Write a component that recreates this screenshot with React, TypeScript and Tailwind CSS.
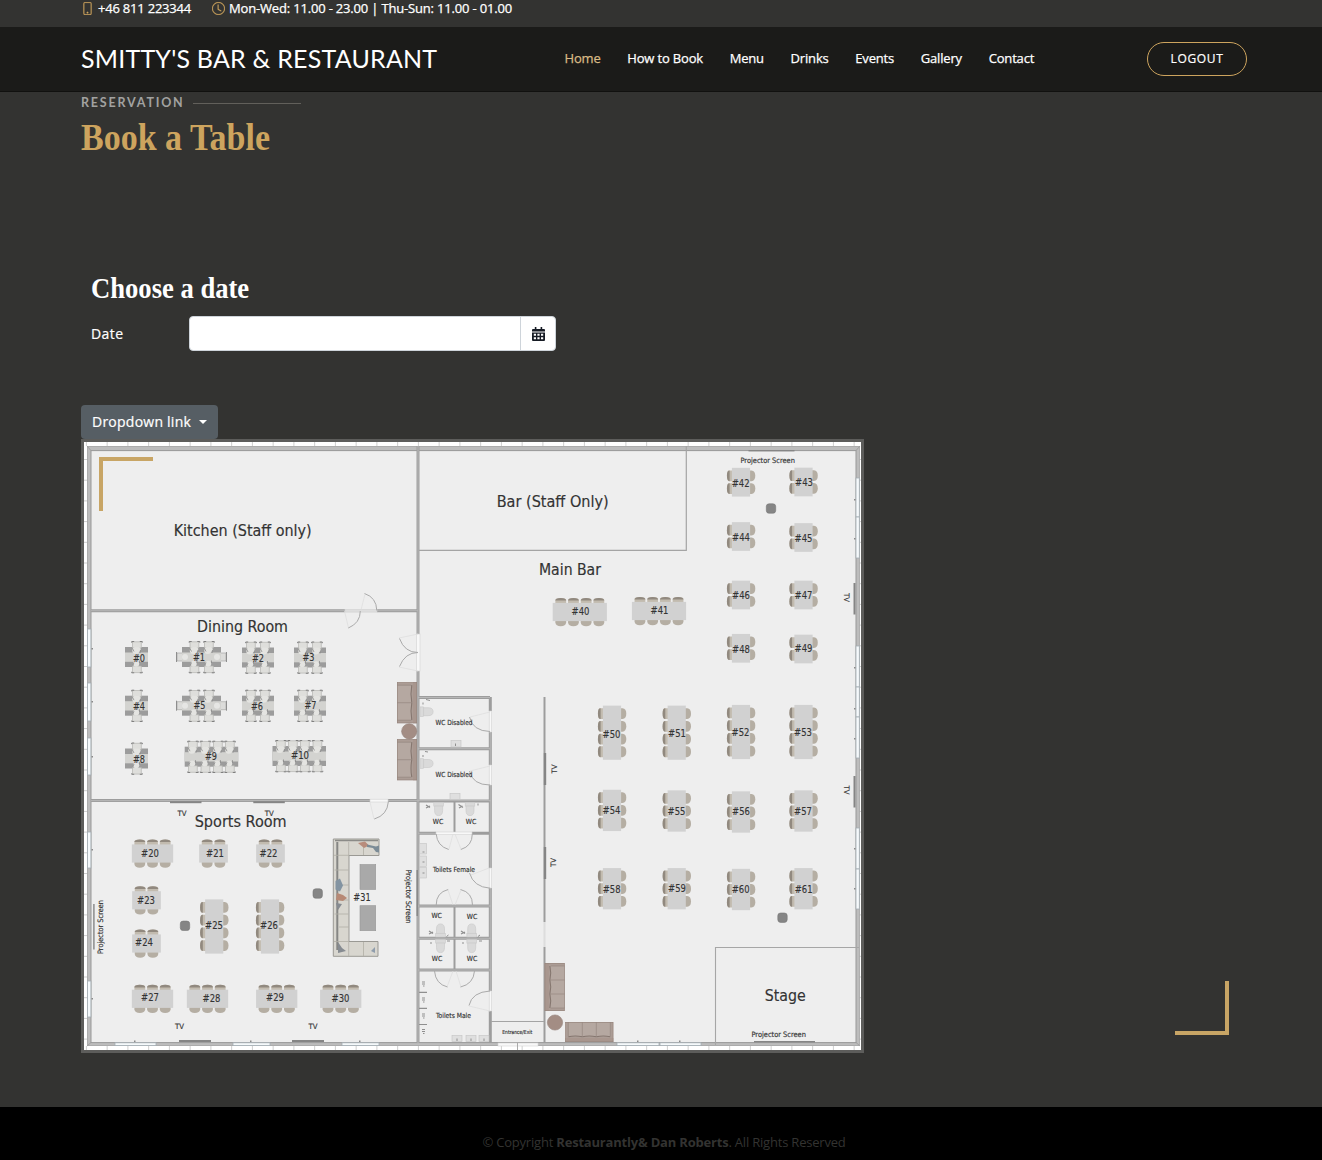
import { BsPhone, BsClock } from 'react-icons/bs';

type Seat = { id: number; x: number; y: number; n: number; lx: number; ly: number };

const flatTables: Seat[] = [
  { id: 20, x: 152.5, y: 853.5, n: 3, lx: 150, ly: 853 },
  { id: 21, x: 213.5, y: 853.5, n: 2, lx: 215, ly: 853.5 },
  { id: 22, x: 270.5, y: 853.5, n: 2, lx: 268.5, ly: 853 },
  { id: 23, x: 146.5, y: 900.3, n: 2, lx: 146, ly: 900 },
  { id: 24, x: 146.5, y: 943.5, n: 2, lx: 144, ly: 942.5 },
  { id: 27, x: 152.5, y: 998.8, n: 3, lx: 150, ly: 997.5 },
  { id: 28, x: 207.5, y: 998.8, n: 3, lx: 211.5, ly: 998.3 },
  { id: 29, x: 276.7, y: 998.8, n: 3, lx: 275, ly: 997.5 },
  { id: 30, x: 340.7, y: 998.8, n: 3, lx: 340.5, ly: 998.3 },
  { id: 40, x: 579.8, y: 612, n: 4, lx: 580.5, ly: 611 },
  { id: 41, x: 659, y: 611, n: 4, lx: 659.5, ly: 610.5 },
];

const tallTables: Seat[] = [
  { id: 25, x: 214.2, y: 926.5, n: 4, lx: 214, ly: 925.5 },
  { id: 26, x: 270, y: 926.5, n: 4, lx: 269, ly: 925 },
  { id: 42, x: 741, y: 482.2, n: 2, lx: 740.7, ly: 483 },
  { id: 43, x: 803.5, y: 482, n: 2, lx: 804, ly: 482.5 },
  { id: 44, x: 741, y: 536.5, n: 2, lx: 741, ly: 537.5 },
  { id: 45, x: 803.5, y: 537.5, n: 2, lx: 803.5, ly: 538 },
  { id: 46, x: 741, y: 595, n: 2, lx: 741, ly: 595.7 },
  { id: 47, x: 803.5, y: 595, n: 2, lx: 803.5, ly: 595 },
  { id: 48, x: 741, y: 648.3, n: 2, lx: 741, ly: 649 },
  { id: 49, x: 803.5, y: 649, n: 2, lx: 803.5, ly: 648.3 },
  { id: 50, x: 612, y: 732.7, n: 4, lx: 611.5, ly: 734 },
  { id: 51, x: 676.7, y: 732.7, n: 4, lx: 677, ly: 733 },
  { id: 52, x: 741, y: 732, n: 4, lx: 740.5, ly: 732.3 },
  { id: 53, x: 803.5, y: 732, n: 4, lx: 803, ly: 732.7 },
  { id: 54, x: 612, y: 810.4, n: 3, lx: 611.5, ly: 810.5 },
  { id: 55, x: 676.7, y: 811, n: 3, lx: 676.5, ly: 811.3 },
  { id: 56, x: 741, y: 812, n: 3, lx: 741, ly: 811.7 },
  { id: 57, x: 803.5, y: 811, n: 3, lx: 803, ly: 811.3 },
  { id: 58, x: 612, y: 888.7, n: 3, lx: 611.7, ly: 889 },
  { id: 59, x: 676.7, y: 888.7, n: 3, lx: 677, ly: 888.5 },
  { id: 60, x: 741, y: 889.5, n: 3, lx: 740.7, ly: 889.5 },
  { id: 61, x: 803.5, y: 888.7, n: 3, lx: 803.7, ly: 889 },
];

type Dining = { id: number; x: number; y: number; w: number; chairs: number[]; ends?: boolean; lx: number; ly: number };

const diningTables: Dining[] = [
  { id: 0, x: 125, y: 647, w: 23, chairs: [132], lx: 139, ly: 658.5 },
  { id: 1, x: 182, y: 647, w: 39, chairs: [189.5, 204], ends: true, lx: 199, ly: 657.5 },
  { id: 2, x: 242, y: 647.5, w: 32, chairs: [246, 260], lx: 258, ly: 658 },
  { id: 3, x: 294, y: 647.5, w: 32, chairs: [298, 312], lx: 308.5, ly: 657.5 },
  { id: 4, x: 125, y: 695.7, w: 23, chairs: [132], lx: 139, ly: 706 },
  { id: 5, x: 182, y: 695.7, w: 39, chairs: [189.5, 204], ends: true, lx: 199.5, ly: 705.5 },
  { id: 6, x: 242, y: 695.7, w: 32, chairs: [246, 260], lx: 257, ly: 706 },
  { id: 7, x: 294, y: 695.7, w: 32, chairs: [298, 312], lx: 310.5, ly: 705.3 },
  { id: 8, x: 125, y: 748.5, w: 23, chairs: [132], lx: 139, ly: 759 },
  { id: 9, x: 184.7, y: 746.7, w: 53.5, chairs: [188, 200.5, 213, 225], lx: 211, ly: 756.5 },
  { id: 10, x: 272.5, y: 746, w: 53.5, chairs: [276, 288, 300, 312.5], lx: 300, ly: 755.5 },
];

function Label({ x, y, w, size, children, rotate = 0 }: { x: number; y: number; w: number; size: number; children: string; rotate?: number }) {
  return (
    <text
      x={x}
      y={y + size * 0.34}
      textAnchor="middle"
      textLength={w}
      lengthAdjust="spacingAndGlyphs"
      fontSize={size}
      fill="#333"
      stroke="#333"
      strokeWidth="0.15"
      transform={rotate ? `rotate(${rotate} ${x} ${y})` : undefined}
      className="font-['DejaVu_Sans_Condensed','Noto_Sans',sans-serif]"
    >
      {children}
    </text>
  );
}

function TableSet({ seat, upright }: { seat: Seat; upright?: boolean }) {
  const len = [0, 0, 28.7, 41.3, 54.2][seat.n];
  const first = -((seat.n - 1) * 12.7) / 2 - 5.4;
  return (
    <>
      <g transform={`translate(${seat.x} ${seat.y})${upright ? ' rotate(-90)' : ''}`}>
        {Array.from({ length: seat.n }, (_, i) => {
          const x = first + i * 12.7;
          return (
            <g key={i}>
              <path d={`M${x} -8 v-4 q0 -2 5.4 -2 t5.4 2 v4z`} fill="#c2bbaf" />
              <path d={`M${x} -11.4 q0 -2.7 5.4 -2.7 t5.4 2.7z`} fill="#91897f" />
              <path d={`M${x} 8 v2.5 q0.5 3.8 5.4 3.8 t5.4 -3.8 v-2.5z`} fill="#b5aea3" />
            </g>
          );
        })}
        <rect x={-len / 2} y="-9.1" width={len} height="18.2" fill="#d1d1d1" />
      </g>
      <Label x={seat.lx} y={seat.ly} w={17.8} size={10.8}>{`#${seat.id}`}</Label>
    </>
  );
}

function DiningSet({ t }: { t: Dining }) {
  return (
    <>
      {t.ends && (
        <g fill="#dcdcda" stroke="#a0a09e" strokeWidth="0.6">
          <path d={`M${t.x + 1} ${t.y + 6} h-6 v8 h6z M${t.x + t.w - 1} ${t.y + 6} h6 v8 h-6z`} />
          <path d={`M${t.x - 5.5} ${t.y + 5} v10 M${t.x + t.w + 5.5} ${t.y + 5} v10`} stroke="#858585" strokeWidth="0.9" />
        </g>
      )}
      <rect x={t.x} y={t.y} width={t.w} height="20" fill="#9c9c9c" />
      <rect x={t.x} y={t.y + 5.5} width={t.w} height="9.3" fill="#d3d3d0" />
      {t.chairs.map((c) => (
        <g key={c}>
          <path d={`M${c + 0.5} ${t.y + 1} v-6.2 h8.8 v6.2z M${c + 0.5} ${t.y + 19} v6.6 h8.8 v-6.6z`} fill="#dededb" stroke="#b3b3b0" strokeWidth="0.7" />
          <path d={`M${c - 0.3} ${t.y - 4.3} v-1.2 h2.5 M${c + 7.8} ${t.y - 5.5} h2.5 v1.2 M${c - 0.3} ${t.y + 24.8} v1 h2.5 M${c + 7.8} ${t.y + 25.8} h2.5 v-1`} fill="none" stroke="#777" strokeWidth="0.9" />
          <circle cx={c + 3.8} cy={t.y + 3.5} r="3.5" fill="#e4e4e1" />
          <circle cx={c + 6.2} cy={t.y + 2.5} r="2.5" fill="#e4e4e1" />
          <circle cx={c + 4.2} cy={t.y + 16.8} r="3" fill="#e4e4e1" />
          <path d={`M${c + 0.5} ${t.y + 1.5} l1.5 3 M${c + 8.5} ${t.y + 3} l-0.5 3 M${c + 1} ${t.y + 18} l1 -2.5 M${c + 7.5} ${t.y + 13.5} v2.5`} stroke="#8a8a8a" strokeWidth="0.8" />
        </g>
      ))}
      {t.ends && (
        <g fill="#e6e6e4">
          <circle cx={t.x + 3} cy={t.y + 10} r="3" />
          <circle cx={t.x + t.w - 4} cy={t.y + 10} r="3" />
        </g>
      )}
      <Label x={t.lx} y={t.ly} w={t.id > 9 ? 18 : 12} size={10.6}>{`#${t.id}`}</Label>
    </>
  );
}

/* Couch seen from above: backrest along the top edge, one cushion per unit. */
function Couch({ x, y, w, n, rotate = 0 }: { x: number; y: number; w: number; n: number; rotate?: number }) {
  const cushion = (w - 6) / n;
  return (
    <g transform={`translate(${x} ${y}) rotate(${rotate})`}>
      <rect x={-w / 2} y="-10" width={w} height="20" fill="#ab9c95" />
      <rect x={-w / 2 + 3} y="-4.5" width={w - 6} height="14" fill="#b5a8a1" />
      <rect x={-w / 2} y="-10" width={w} height="4" fill="#a8968e" />
      {Array.from({ length: n }, (_, i) => (
        <path key={i} d={`M${-w / 2 + 3 + i * cushion} -4.8 q${cushion / 2} 1.6 ${cushion} 0`} fill="none" stroke="#85766f" strokeWidth="1.1" />
      ))}
      {Array.from({ length: n + 1 }, (_, i) => (
        <path key={i} d={`M${-w / 2 + 3 + i * cushion} -4 v14`} stroke="#95867f" strokeWidth="0.7" />
      ))}
      <rect x={-w / 2 + 0.3} y="-9.7" width={w - 0.6} height="19.4" fill="none" stroke="#96857d" strokeWidth="0.6" />
    </g>
  );
}

function Toilet({ x, y, rotate = 0 }: { x: number; y: number; rotate?: number }) {
  return (
    <g transform={`translate(${x} ${y}) rotate(${rotate})`} fill="#dadada" stroke="#c8c8c8" strokeWidth="0.6">
      <rect x="-4.8" y="0" width="9.6" height="3.6" />
      <path d="M-4 3.6 h8 v4.5 q0 5 -4 5 t-4 -5z" />
    </g>
  );
}

function FloorPlan() {
  return (
    <svg viewBox="84 442 777 608" className="block h-[608px] w-[777px]">
      <rect x="84" y="442" width="777" height="608" fill="#fff" />
      <g stroke="#cfcfcf" strokeWidth="1">
        {Array.from({ length: 38 }, (_, i) => (
          <path key={i} d={`M${86.4 + i * 20.75} 442 v4 M${86.4 + i * 20.75} 1046 v4`} />
        ))}
        {Array.from({ length: 29 }, (_, i) => (
          <path key={i} d={`M84 ${459.5 + i * 20.7} h3.5 M859.5 ${459.5 + i * 20.7} h1.5`} />
        ))}
      </g>

      {/* outer walls */}
      <rect x="87.4" y="446.4" width="772" height="599.2" fill="#bcbcbc" stroke="#a2a2a2" strokeWidth="0.8" />
      <rect x="91" y="450.6" width="765" height="592" fill="#eeeeee" stroke="#989898" strokeWidth="1" />
      <path d="M87 446 l4 4.6 M860 446 l-4 4.6 M87 1046 l4 -3.5 M860 1046 l-4 -3.5" stroke="#999" strokeWidth="0.8" />

      {/* windows */}
      <g fill="#f5f9fb" stroke="#a3adb3" strokeWidth="0.8">
        {[[629, 38], [683, 38], [738, 37], [832, 36], [981, 36]].map(([y, h]) => (
          <rect key={y} x="87.6" y={y} width="3.3" height={h} />
        ))}
        {[[478, 39], [517, 41], [646, 41], [687, 30], [717, 41], [828, 41], [869, 40]].map(([y, h]) => (
          <rect key={y} x="856" y={y} width="3.3" height={h} />
        ))}
        {[[115, 41], [233, 37], [342, 37], [617, 42], [660, 41]].map(([x, w]) => (
          <rect key={x} x={x} y="1042.8" width={w} height="2.8" />
        ))}
      </g>
      <g fill="#8a8a8a">
        {[648, 701, 756, 849, 998].map((y) => <rect key={y} x="91.5" y={y} width="1.5" height="1.5" />)}
        {[499, 538, 667, 708, 738, 848, 888].map((y) => <rect key={y} x="854" y={y} width="1.5" height="1.5" />)}
        {[134, 250, 359, 637, 679].map((x) => <rect key={x} x={x} y="1040.5" width="1.5" height="1.5" />)}
      </g>

      {/* inner walls: dark outline with a lighter core */}
      <g fill="none" stroke="#9d9d9d" strokeWidth="3">
        <path d="M91 610.7 H345 M377 610.7 H418 M91 800.6 H370 M388 800.6 H418" />
        <path d="M418 446 V634 M418 671 V1043" />
        <path d="M418 697.5 H490 M418 748.7 H490 M418 801 H491 M418 833.3 H436 M472 833.3 H491 M418 906 H491 M418 938.3 H491 M418 970 H491" />
        <path d="M490.3 697 V711 M490.3 732 V765 M490.3 785 V868 M490.3 888 V991 M490.3 1011 V1043" />
        <path d="M454.5 802 V833 M454.5 906 V970" strokeWidth="2" />
      </g>
      <g fill="none" stroke="#b7b7b7" strokeWidth="1">
        <path d="M91 610.7 H345 M377 610.7 H418 M91 800.6 H370 M388 800.6 H491 M418 446 V634 M418 671 V1043" />
        <path d="M418 697.5 H490 M418 748.7 H490 M418 833.3 H436 M418 906 H491 M418 938.3 H491 M418 970 H491 M490.3 732 V765 M490.3 785 V868 M490.3 888 V991" />
      </g>
      <path d="M544.5 697 V922 M544.5 947 V1043" stroke="#9d9d9d" strokeWidth="2" />
      <path d="M544.5 922 V947" stroke="#ddd" strokeWidth="2" />
      <path d="M419 550.3 H686.3 V446" fill="none" stroke="#a4a4a4" strokeWidth="1.2" />
      <path d="M491 1021.5 H544" stroke="#a4a4a4" strokeWidth="1" />
      <path d="M715.5 1045 V947.5 H859" fill="none" stroke="#a6a6a6" strokeWidth="1.1" />
      <path d="M419 992.3 h8 M419 1008.3 h8 M419 1024.5 h8" stroke="#8f8f8f" strokeWidth="1.2" />

      {/* doors */}
      <g fill="#f8f8f8" stroke="#d2d2d2" strokeWidth="0.6">
        <rect x="345" y="609.3" width="32" height="2.8" fill="#dedede" />
        <rect x="370" y="799.2" width="18" height="2.8" />
        <rect x="416.6" y="634" width="3.4" height="37" />
        <rect x="489.2" y="711" width="2.4" height="21" />
        <rect x="489.2" y="765" width="2.4" height="20" />
        <rect x="489.2" y="868" width="2.4" height="20" />
        <rect x="489.2" y="991" width="2.4" height="20" />
        <rect x="436" y="832" width="36" height="2.6" />
        <rect x="498" y="1043" width="40" height="3" />
      </g>
      <path d="M517.5 1042 v8" stroke="#aaa" />
      <g fill="none" stroke="#dcdcdc" strokeWidth="0.7">
        <path d="M361 610 l4 -16 M344.5 611 l4 17 M399 638 l19 -4 M399 667 l19 4 M470 717 l20 -5 M470 771 l20 -5 M471 875 l18 -7 M469 1006 l21 5 M374 819 l-4 -17" />
        <path d="M449 849 l4 -15 M461 849 l-6 -15 M448 890 l5 15 M461 890 l-6 15 M447 987 l6 -16 M461 987 l-5 -16" />
      </g>
      <g fill="none" stroke="#aaaaaa" strokeWidth="1">
        <path d="M364.5 593.5 q12 4 12.3 17 M360.3 611 q0 12 -12 17" />
        <path d="M399.5 638.5 q5 14 18.5 14 q-13 0 -18.5 14" />
        <path d="M388.3 802 q-1 13 -14 17" />
        <path d="M469.5 717 q3 14 20.5 14.5 M469.5 771 q3 14 20.5 14 M469.5 873 q4 14 20.5 15.2 M469 1005.5 q3 -13.5 21 -14.5" />
        <path d="M436.2 834 q1 12 12.5 15.5 M472.3 834 q0 12 -11.5 15.5 M436.2 905 q0 -12.5 12 -15.5 M472.5 905 q0 -12.5 -12 -15.5" />
        <path d="M434.5 971 q1 13 13 16 M474.5 971 q-1 13 -14 16" />
      </g>

      {/* screens and televisions */}
      <g fill="#858585">
        <rect x="170" y="801.2" width="31.5" height="2" />
        <rect x="253.3" y="801.2" width="31.5" height="2" />
        <rect x="179" y="1040" width="32" height="2" />
        <rect x="292" y="1040" width="32" height="2" />
        <rect x="853.5" y="583" width="2" height="31.5" />
        <rect x="853.5" y="776" width="2" height="31.5" />
        <rect x="543.8" y="753" width="2.4" height="32" />
        <rect x="543.8" y="847" width="2.4" height="32" />
        <rect x="748.5" y="450" width="46" height="1.4" />
        <rect x="754" y="1041" width="61" height="1.4" />
        <rect x="93.2" y="904" width="1.4" height="45.5" />
        <rect x="416.5" y="870" width="1.4" height="46" />
      </g>

      {/* restroom fittings */}
      <Toilet x={420} y={711.7} rotate={-90} />
      <Toilet x={420} y={763.5} rotate={-90} />
      <Toilet x={438.6} y={802.5} />
      <Toilet x={470} y={802.5} />
      <Toilet x={440.5} y={937} rotate={180} />
      <Toilet x={471.7} y={937} rotate={180} />
      <Toilet x={440.5} y={939.5} />
      <Toilet x={471.7} y={939.5} />
      <g fill="#dfdfdf" stroke="#c4c4c4" strokeWidth="0.6">
        <rect x="451" y="740.5" width="10" height="6.5" />
        <rect x="450" y="793.5" width="10" height="6" />
        {[843.5, 856, 867.5].map((y) => <rect key={y} x="419.5" y={y} width="7" height="10.5" />)}
        {[452, 466, 479].map((x) => <rect key={x} x={x} y="1035.5" width="10" height="6" />)}
      </g>
      <g stroke="#8f8f8f" strokeWidth="1" fill="none">
        <path d="M426 699.5 l4 1 M423 702.5 v2 M425 751.5 l3 0.5 M423 755 v2 M455.5 743.5 v2.5 M478 803.5 v2" />
        <path d="M422.5 852 h2 M422.5 862 h2 M422.5 873 h2 M457 1038.5 v2.5 M471 1038.5 v2.5 M484 1038.5 v2.5 M448.5 935 l-2 1.5 M480 935 l-2 1.5 M447 941 h3 M479 941 h3 M431 942 v2 M463 942 v2" />
        {[984, 1000, 1016, 1031.5].map((y) => <path key={y} d={`M422 ${y - 2} h3 M422 ${y} h3 M423 ${y + 2} h1.5`} strokeWidth="1.1" />)}
        <path d="M426 805 l4 2.5 M426 808 l4 -2 M458.5 804.5 l4.5 3 M459 808 l3.5 -2 M429 931 l4 2.5 M429 934 l4 -2 M461 931 l4 2.5 M461 934 l4 -2" strokeWidth="1.2" />
      </g>

      {/* lounge furniture */}
      <Couch x={407} y={702.7} w={41} n={2} rotate={90} />
      <Couch x={407} y={759.7} w={41} n={2} rotate={90} />
      <Couch x={554.7} y={987} w={48} n={3} rotate={-90} />
      <Couch x={589.3} y={1032} w={48} n={3} rotate={180} />
      <g fill="#a38d84" stroke="#94817a" strokeWidth="0.6">
        <circle cx="409.2" cy="731.3" r="7.6" />
        <circle cx="555" cy="1022.5" r="7.6" />
      </g>
      <g fill="#858585" stroke="#777" strokeWidth="0.6">
        {[[317.7, 893.5], [185, 925.8], [771, 508.5], [782.5, 917.7]].map(([x, y]) => (
          <rect key={x} x={x - 4.7} y={y - 4.7} width="9.4" height="9.4" rx="2.8" />
        ))}
      </g>

      {/* corner sofa around table 31 */}
      <path d="M333.3 839 H379 V855.5 H349 V941.5 H378 V956.3 H333.3z" fill="#d8d6cf" stroke="#9a9994" strokeWidth="1" />
      <path d="M335 840.5 H378" stroke="#8b8b88" strokeWidth="1.5" />
      <path d="M337.3 842 V950" stroke="#868684" strokeWidth="2" />
      <path d="M334.5 870 h14 M339 885 h10 M339 900 h10 M334.5 914 h14 M339 927 h10 M348.7 842 v14 M363.5 842 v13 M348.7 942 v14 M363.5 942 v14 M334 855.3 h15 M334 941.5 h15" stroke="#b1aea6" strokeWidth="0.8" />
      <path d="M358 843 l7 -1.5 l4 4 l-5 2.5z" fill="#b88c7c" />
      <path d="M367 844.5 l9 2 l3 -1 v7 l-3 -0.5 l-3 -4 l-6 -1z" fill="#7b8b96" />
      <path d="M335.5 881 l4.5 -2.5 l3 7 l-3 6 l-4.5 -2z" fill="#8394a2" />
      <path d="M337 893 l6 2 l4 3 l-4 3 l-7 -1z" fill="#b78975" />
      <path d="M336 903 l6 1 l-4 6 M338 942 l4 6 l4 3 l-8 2" fill="#868b91" />
      <path d="M371 951 l4 -4 v6z" fill="#8f9dac" />
      <rect x="360" y="864.5" width="15.7" height="25" fill="#a9a9a9" stroke="#969696" strokeWidth="0.6" />
      <rect x="360" y="905.7" width="15.7" height="25" fill="#a9a9a9" stroke="#969696" strokeWidth="0.6" />
      <Label x={362} y={897} w={17.3} size={10.8}>#31</Label>

      {diningTables.map((t) => <DiningSet key={t.id} t={t} />)}
      {flatTables.map((s) => <TableSet key={s.id} seat={s} />)}
      {tallTables.map((s) => <TableSet key={s.id} seat={s} upright />)}

      <Label x={242.7} y={530.7} w={138} size={16}>Kitchen (Staff only)</Label>
      <Label x={552.7} y={501.3} w={112} size={16}>Bar (Staff Only)</Label>
      <Label x={570} y={569.3} w={62} size={16}>Main Bar</Label>
      <Label x={242.5} y={627} w={91} size={16}>Dining Room</Label>
      <Label x={240.7} y={821.5} w={92} size={16}>Sports Room</Label>
      <Label x={785.2} y={995.7} w={41} size={16}>Stage</Label>
      <Label x={767.7} y={460.3} w={54.5} size={7.5}>Projector Screen</Label>
      <Label x={778.7} y={1034.3} w={54.5} size={7.5}>Projector Screen</Label>
      <Label x={100.3} y={927} w={54} size={7.5} rotate={-90}>Projector Screen</Label>
      <Label x={409} y={896.5} w={54} size={7.5} rotate={90}>Projector Screen</Label>
      <Label x={182} y={813.7} w={9} size={7.5}>TV</Label>
      <Label x={269.3} y={813} w={9} size={7.5}>TV</Label>
      <Label x={179.5} y={1026} w={9} size={7.5}>TV</Label>
      <Label x={313} y={1026} w={9} size={7.5}>TV</Label>
      <Label x={847} y={597.5} w={9} size={7.5} rotate={90}>TV</Label>
      <Label x={847} y={790} w={9} size={7.5} rotate={90}>TV</Label>
      <Label x={554.5} y={769} w={9} size={7.5} rotate={-90}>TV</Label>
      <Label x={553.7} y={862.5} w={9} size={7.5} rotate={-90}>TV</Label>
      <Label x={454} y={723} w={37} size={7}>WC Disabled</Label>
      <Label x={454} y={774.7} w={37} size={7}>WC Disabled</Label>
      <Label x={438} y={822} w={10.5} size={7}>WC</Label>
      <Label x={471} y={822} w={10.5} size={7}>WC</Label>
      <Label x={454} y={870} w={42} size={7}>Toilets Female</Label>
      <Label x={436.7} y={915.8} w={10.5} size={7}>WC</Label>
      <Label x={472} y={916.5} w={10.5} size={7}>WC</Label>
      <Label x={437} y={959} w={10.5} size={7}>WC</Label>
      <Label x={472} y={959} w={10.5} size={7}>WC</Label>
      <Label x={453.5} y={1016} w={35} size={7}>Toilets Male</Label>
      <Label x={517.3} y={1032.2} w={30} size={5.5}>Entrance/Exit</Label>
    </svg>
  );
}

function CalendarIcon() {
  return (
    <svg viewBox="0 0 13 14" className="h-[14px] w-[13px]" fill="currentColor">
      <path d="M2.8 0h1.6v2h4.2V0h1.6v2H12a1 1 0 0 1 1 1v1.6H0V3a1 1 0 0 1 1-1h1.8z" />
      <path
        fillRule="evenodd"
        d="M0 5.4h13V13a1 1 0 0 1-1 1H1a1 1 0 0 1-1-1zM1.8 6.8v2h2.2v-2zM5.4 6.8v2h2.2v-2zM9 6.8v2h2.2v-2zM1.8 10.3v2h2.2v-2zM5.4 10.3v2h2.2v-2zM9 10.3v2h2.2v-2z"
      />
    </svg>
  );
}

const links = ['Home', 'How to Book', 'Menu', 'Drinks', 'Events', 'Gallery', 'Contact'];

export default function App() {
  return (
    <div className="flex h-[1160px] w-full flex-col overflow-hidden bg-[#333331] font-['Open_Sans','Noto_Sans',sans-serif] text-white">
      <div className="flex h-[27px] shrink-0 items-start pl-[81px] text-[13px] leading-[17px] [-webkit-text-stroke:0.25px]">
        <BsPhone className="mt-[2px] size-[13px] text-[#cda45e]" strokeWidth={0.3} />
        <span className="ml-1 tracking-[-0.21px]">+46 811 223344</span>
        <BsClock className="ml-[21px] mt-[2px] size-[13px] text-[#cda45e]" strokeWidth={0.3} />
        <span className="ml-[4px] whitespace-pre tracking-[-0.175px]">Mon-Wed: 11.00 - 23.00 | Thu-Sun: 11.00 - 01.00</span>
      </div>

      <header className="flex h-[65px] shrink-0 items-center border-b border-[#11110f] bg-[#1b1b19] pl-[81px] pr-[75px]">
        <h1 className="mb-[3px] w-[483.5px] whitespace-nowrap font-['Lato',sans-serif] text-[25px] leading-8 tracking-[0.21px]">
          SMITTY'S BAR &amp; RESTAURANT
        </h1>
        <nav className="flex gap-[26.7px] whitespace-nowrap text-[13px] tracking-[-0.17px] [-webkit-text-stroke:0.25px]">
          {links.map((l, i) => (
            <a key={l} href="#" className={i === 0 ? 'text-[#d9ba85]' : 'text-white'}>{l}</a>
          ))}
        </nav>
        <button className="ml-auto h-[34px] w-[100px] rounded-[17px] border border-[#cda45e] text-[12px] tracking-[0.66px] [-webkit-text-stroke:0.2px]">
          LOGOUT
        </button>
      </header>

      <main className="relative flex-1 pl-[81px]">
        <div className="flex h-[21px] items-center pt-[2px] font-['Lato',sans-serif] text-[12.5px] font-bold tracking-[1.8px] text-[#a2a2a0]">
          RESERVATION
          <span className="ml-[8px] h-px w-[108px] bg-[#62605b]" />
        </div>
        <h2 className="mt-[3px] h-[42px] origin-left scale-x-[0.895] whitespace-nowrap font-['Liberation_Serif',serif] text-[38px] font-bold leading-[42px] text-[#cda45e]">
          Book a Table
        </h2>

        <section className="mt-[113px] pl-[10px]">
          <h3 className="h-8 origin-left scale-x-[0.887] whitespace-nowrap font-['Liberation_Serif',serif] text-[30px] font-bold leading-[33px]">Choose a date</h3>
          <div className="mt-[13px] flex h-[35px] items-center">
            <label className="w-[98px] text-[14px] tracking-[0.4px] [-webkit-text-stroke:0.2px]">Date</label>
            <div className="flex h-[35px] w-[367px] overflow-hidden rounded-[4px] border border-[#ced4da] bg-white">
              <input className="min-w-0 flex-1 px-3 text-sm text-black outline-none" />
              <span className="flex w-[35px] items-center justify-center border-l border-[#ced4da] text-[#161b24]">
                <CalendarIcon />
              </span>
            </div>
          </div>
        </section>

        <button className="mt-[54px] flex h-[34px] w-[137px] items-center rounded-[4px] bg-[#565e64] pb-[2px] pl-[11px] text-[14px] tracking-[0.24px] [-webkit-text-stroke:0.2px]">
          Dropdown link
          <span className="ml-[8px] mt-[2px] border-x-4 border-t-4 border-x-transparent border-t-white" />
        </button>
        <div className="relative h-[614px] w-[783px] border-[3px] border-[#5d5d5b]">
          <FloorPlan />
          <span className="absolute left-[15px] top-[15px] size-[54px] border-l-4 border-t-4 border-[#c8a565]" />
        </div>
        <span className="absolute bottom-[72px] right-[93px] size-[54px] border-b-4 border-r-4 border-[#c8a565]" />
      </main>

      <footer className="flex h-[53px] shrink-0 items-start justify-center bg-black pl-[6px] pt-[26px] text-[13px] leading-[18px] tracking-[-0.2px] text-[#333331]">
        <p>
          © Copyright <strong className="font-bold">Restaurantly&amp; Dan Roberts</strong>. All Rights Reserved
        </p>
      </footer>
    </div>
  );
}
